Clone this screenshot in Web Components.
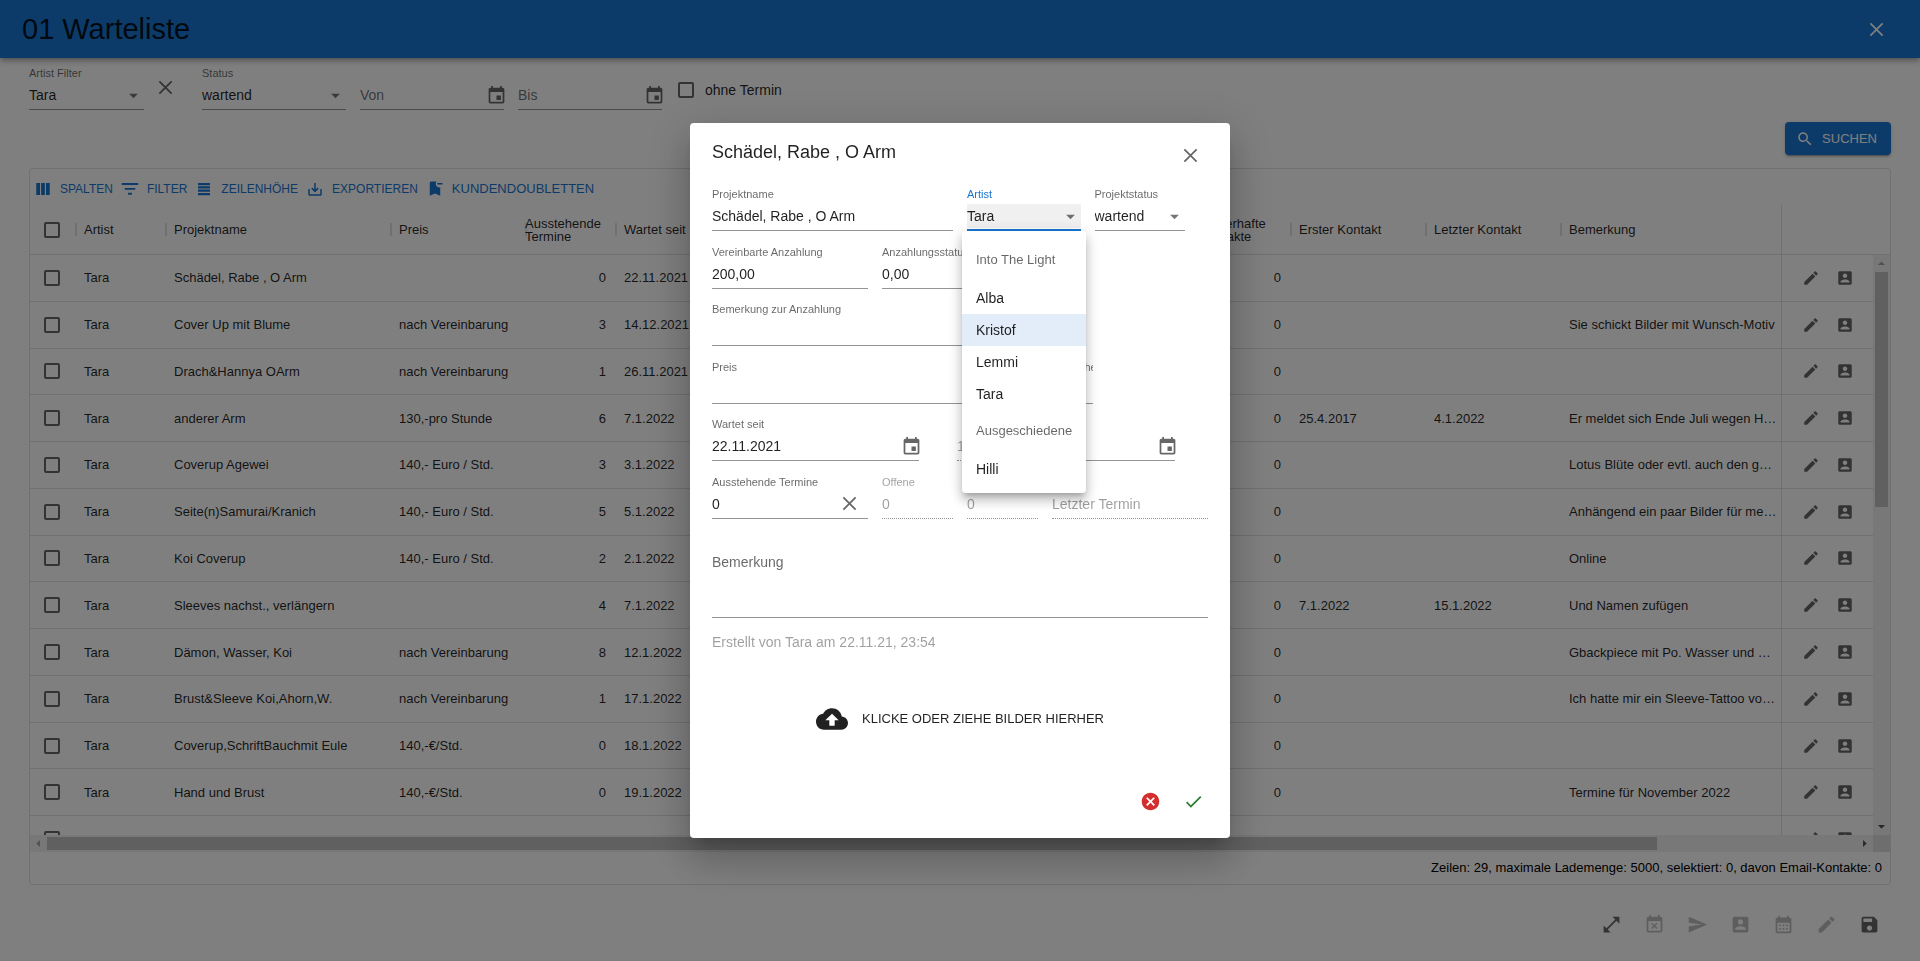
<!DOCTYPE html>
<html lang="de">
<head>
<meta charset="utf-8">
<title>01 Warteliste</title>
<style>
  html, body { margin: 0; height: 100%; }
  body { font-family: "Liberation Sans", Arial, sans-serif; font-size: 14px; color: rgba(0,0,0,.87); background: #fff; overflow: hidden; }
</style>
</head>
<body>
<wl-app></wl-app>
<script>
const PATHS = {
  close: '<path d="M5 5L19 19M19 5L5 19" fill="none" stroke="currentColor" stroke-width="2"/>',
  down: '<path d="M7 10l5 5 5-5z"/>',
  event: '<path d="M17 12h-5v5h5v-5zM16 1v2H8V1H6v2H5c-1.11 0-1.99.9-1.99 2L3 19c0 1.1.89 2 2 2h14c1.1 0 2-.9 2-2V5c0-1.1-.9-2-2-2h-1V1h-2zm3 18H5V8h14v11z"/>',
  search: '<path d="M15.5 14h-.79l-.28-.27C15.41 12.59 16 11.11 16 9.5 16 5.91 13.09 3 9.5 3S3 5.91 3 9.5 5.91 16 9.5 16c1.61 0 3.09-.59 4.23-1.57l.27.28v.79l5 4.99L20.49 19l-4.99-5zm-6 0C7.01 14 5 11.99 5 9.5S7.01 5 9.5 5 14 7.01 14 9.5 11.99 14 9.5 14z"/>',
  columns: '<path d="M3 4h5v16H3zM9.500 4h5v16h-5zM16 4h5v16h-5z"/>',
  filter: '<path d="M1 4h22v2.500H1zM5 10.500h14V13H5zM9.500 17h5v2.500h-5z"/>',
  density: '<path d="M4 4h16v3H4zM4 8.400h16v3H4zM4 12.800h16v3H4zM4 17.200h16v3H4z"/>',
  saveAlt: '<path d="M19 12v7H5v-7H3v7c0 1.1.9 2 2 2h14c1.1 0 2-.9 2-2v-7h-2zm-6 .67l2.59-2.58L17 11.5l-5 5-5-5 1.41-1.41L11 12.67V4h2z"/>',
  bookmark: '<path d="M22 6h-7V4h7v2zm-3 15l-7-3-7 3V4c0-1.1.9-2 2-2h7c-.63.84-1 1.87-1 3 0 2.76 2.24 5 5 5 .34 0 .68-.03 1-.1V21z"/>',
  edit: '<path d="M3 17.25V21h3.75L17.81 9.94l-3.75-3.75L3 17.25zM20.71 7.04c.39-.39.39-1.02 0-1.41l-2.34-2.34c-.39-.39-1.02-.39-1.41 0l-1.83 1.83 3.75 3.75 1.83-1.83z"/>',
  contact: '<path d="M3 5v14c0 1.1.89 2 2 2h14c1.1 0 2-.9 2-2V5c0-1.1-.9-2-2-2H5c-1.11 0-2 .9-2 2zm12 4c0 1.66-1.34 3-3 3s-3-1.34-3-3 1.34-3 3-3 3 1.34 3 3zm-9 8c0-2 4-3.1 6-3.1s6 1.1 6 3.1v1H6v-1z"/>',
  expand: '<path d="M21 11V3h-8l3.29 3.29-10 10L3 13v8h8l-3.29-3.29 10-10z"/>',
  eventBusy: '<path d="M9.31 17l2.44-2.44L14.19 17l1.06-1.06-2.44-2.44 2.44-2.44L14.19 10l-2.44 2.44L9.31 10l-1.06 1.06 2.44 2.44-2.44 2.44L9.31 17zM19 3h-1V1h-2v2H8V1H6v2H5c-1.11 0-1.99.9-1.99 2L3 19c0 1.1.89 2 2 2h14c1.1 0 2-.9 2-2V5c0-1.1-.9-2-2-2zm0 16H5V8h14v11z"/>',
  send: '<path d="M2.01 21L23 12 2.01 3 2 10l15 2-15 2z"/>',
  month: '<path d="M19 4h-1V2h-2v2H8V2H6v2H5c-1.11 0-1.99.9-1.99 2L3 20c0 1.1.89 2 2 2h14c1.1 0 2-.9 2-2V6c0-1.1-.9-2-2-2zm0 16H5V10h14v10zM9 14H7v-2h2v2zm4 0h-2v-2h2v2zm4 0h-2v-2h2v2zm-8 4H7v-2h2v2zm4 0h-2v-2h2v2zm4 0h-2v-2h2v2z"/>',
  save: '<path d="M17 3H5c-1.11 0-2 .9-2 2v14c0 1.1.89 2 2 2h14c1.1 0 2-.9 2-2V7l-4-4zm-5 16c-1.66 0-3-1.34-3-3s1.34-3 3-3 3 1.34 3 3-1.34 3-3 3zm3-10H5V5h10v4z"/>',
  upload: '<path d="M19.35 10.04C18.67 6.59 15.64 4 12 4 9.11 4 6.6 5.64 5.35 8.04 2.34 8.36 0 10.91 0 14c0 3.31 2.69 6 6 6h13c2.76 0 5-2.24 5-5 0-2.64-2.05-4.78-4.65-4.96zM14 13v4h-4v-4H7l5-5 5 5h-3z"/>',
  cancel: '<path d="M12 2C6.47 2 2 6.47 2 12s4.47 10 10 10 10-4.47 10-10S17.53 2 12 2zm5 13.59L15.59 17 12 13.41 8.41 17 7 15.59 10.59 12 7 8.41 8.41 7 12 10.59 15.59 7 17 8.41 13.41 12 17 15.59z"/>',
  check: '<path d="M9 16.17L4.83 12l-1.42 1.41L9 19 21 7l-1.41-1.41z"/>',
  up: '<path d="M7 14l5-5 5 5z"/>', left: '<path d="M14 7l-5 5 5 5z"/>', right: '<path d="M10 7l5 5-5 5z"/>'
};
const def = (name, render) => customElements.define(name, class extends HTMLElement {
  constructor() { super(); this.attachShadow({ mode: 'open' }); }
  connectedCallback() { this.shadowRoot.innerHTML = render(this); }
});

/* size comes from --icon, 21px by default */
def('wl-icon', el => `
  <style>:host{display:block;flex:none;width:var(--icon,21px);height:var(--icon,21px)}svg{display:block;width:100%;height:100%;fill:currentColor}</style>
  <svg viewBox="0 0 24 24" aria-hidden="true">${PATHS[el.getAttribute('name')]}</svg>`);

def('wl-icon-button', el => `
  <style>
    :host{display:block;flex:none}
    button{display:flex;align-items:center;justify-content:center;width:var(--size,21px);height:var(--size,21px);margin:0;padding:0;border:0;background:none;color:inherit}
  </style>
  <button type="button" aria-label="${el.getAttribute('label')}" ${el.hasAttribute('disabled') ? 'disabled' : ''}><wl-icon name="${el.getAttribute('icon')}"></wl-icon></button>`);

def('wl-checkbox', el => `
  <style>
    :host{display:block}
    label{display:flex;align-items:center;gap:11px}
    input{appearance:none;width:16px;height:16px;margin:0;border:2px solid rgba(0,0,0,.6);border-radius:2px;flex:none}
  </style>
  <label><input type="checkbox" ${el.hasAttribute('name') ? `aria-label="${el.getAttribute('name')}"` : ''}><slot></slot></label>`);

/* text, select or date field with floating label and underline */
def('wl-field', el => {
  const a = n => el.getAttribute(n) || '', kind = a('kind'), dis = el.hasAttribute('disabled') ? 'disabled' : '';
  const control = kind === 'select'
    ? `<select id="c" ${dis}><option>${a('value')}</option></select><wl-icon class="arrow" name="down"></wl-icon>`
    : `<input id="c" type="text" value="${a('value')}" placeholder="${a('placeholder')}" ${dis}>` +
      (kind === 'date' ? '<wl-icon-button class="cal" icon="event" label="Datum wählen"></wl-icon-button>' : '') +
      (kind === 'clear' ? '<wl-icon-button class="clear" icon="close" label="Leeren"></wl-icon-button>' : '');
  return `
  <style>
    :host{display:block;min-width:0;position:relative}
    label{display:block;height:15px;font-size:11px;line-height:15px;color:rgba(0,0,0,.6);white-space:nowrap}
    .row{display:flex;align-items:center;height:28px;border-bottom:1px solid rgba(0,0,0,.42)}
    input,select{appearance:none;flex:1;min-width:0;width:100%;height:24px;margin:0;padding:0;border:0;border-radius:0;background:none;font:inherit;color:rgba(0,0,0,.87);outline:0;opacity:1}
    input::placeholder{color:rgba(0,0,0,.58);opacity:1}
    .arrow{margin-left:-21px;color:rgba(0,0,0,.54);pointer-events:none}
    .cal{margin-right:-3px;color:rgba(0,0,0,.6)}
    .clear{margin-right:8px;color:rgba(0,0,0,.6)}
    :host([focused]) label{color:#1976d2}
    :host([focused]) .row{border-bottom:1px solid #1976d2;box-shadow:inset 0 -1px #1976d2}
    :host([focused]) select{background:#f0f0f0}
    :host([disabled]) label,:host([disabled]) input,:host([disabled]) input::placeholder{color:rgba(0,0,0,.38);-webkit-text-fill-color:rgba(0,0,0,.38)}
    :host([disabled]) .row{border-bottom-style:dotted}
    :host([tail]) label{box-sizing:border-box;overflow:hidden;padding-left:calc(100% - 8px)}
  </style>
  <label for="c">${a('label')}</label><div class="row">${control}</div><slot></slot>`;
});

def('wl-header', el => `
  <style>
    :host{display:flex;align-items:center;justify-content:space-between;height:58px;padding:0 33px 0 22px;background:#1976d2;color:rgba(0,0,0,.87);box-shadow:0 2px 4px -1px rgba(0,0,0,.2),0 4px 5px rgba(0,0,0,.14),0 1px 10px rgba(0,0,0,.12);position:relative}
    h1{margin:0;font-size:29px;line-height:32px;font-weight:400}
    wl-icon-button{color:#fff}
  </style>
  <h1><slot></slot></h1><wl-icon-button icon="close" label="Schließen"></wl-icon-button>`);

def('wl-filters', el => `
  <style>
    :host{display:block;padding:8px 29px 13px}
    .fields{display:flex}
    .f{width:144px;margin-right:14px}
    .a{width:115px}
    .x{margin:11px 26px 0 11px;color:rgba(0,0,0,.6)}
    .c{margin:16px 0 0 2px;align-self:flex-start}
    .go{display:flex;justify-content:flex-end;margin-top:12px}
    button{display:flex;align-items:center;gap:8px;height:33px;padding:0 14px 0 11px;border:0;border-radius:4px;background:#1976d2;color:#fff;font:13px/20px "Liberation Sans",Arial,sans-serif;--icon:18px;box-shadow:0 3px 1px -2px rgba(0,0,0,.2),0 2px 2px rgba(0,0,0,.14),0 1px 5px rgba(0,0,0,.12)}
  </style>
  <div class="fields">
    <wl-field class="a" kind="select" label="Artist Filter" value="Tara"></wl-field>
    <wl-icon-button class="x" icon="close" label="Filter löschen"></wl-icon-button>
    <wl-field class="f" kind="select" label="Status" value="wartend"></wl-field>
    <wl-field class="f" kind="date" placeholder="Von"></wl-field>
    <wl-field class="f" kind="date" placeholder="Bis"></wl-field>
    <wl-checkbox class="c">ohne Termin</wl-checkbox>
  </div>
  <div class="go"><button type="button"><wl-icon name="search"></wl-icon>SUCHEN</button></div>`);

const V = 'nach Vereinbarung', E = '140,- Euro / Std.', S = '140,-€/Std.';
const ROWS = [
  ['Schädel, Rabe , O Arm', '', 0, '22.11.2021', '', '', ''],
  ['Cover Up mit Blume', V, 3, '14.12.2021', '', '', 'Sie schickt Bilder mit Wunsch-Motiv'],
  ['Drach&amp;Hannya OArm', V, 1, '26.11.2021', '', '', ''],
  ['anderer Arm', '130,-pro Stunde', 6, '7.1.2022', '25.4.2017', '4.1.2022', 'Er meldet sich Ende Juli wegen H…'],
  ['Coverup Agewei', E, 3, '3.1.2022', '', '', 'Lotus Blüte oder evtl. auch den g…'],
  ['Seite(n)Samurai/Kranich', E, 5, '5.1.2022', '', '', 'Anhängend ein paar Bilder für me…'],
  ['Koi Coverup', E, 2, '2.1.2022', '', '', 'Online'],
  ['Sleeves nachst., verlängern', '', 4, '7.1.2022', '7.1.2022', '15.1.2022', 'Und Namen zufügen'],
  ['Dämon, Wasser, Koi', V, 8, '12.1.2022', '', '', 'Gbackpiece mit Po. Wasser und …'],
  ['Brust&amp;Sleeve Koi,Ahorn,W.', V, 1, '17.1.2022', '', '', 'Ich hatte mir ein Sleeve-Tattoo vo…'],
  ['Coverup,SchriftBauchmit Eule', S, 0, '18.1.2022', '', '', ''],
  ['Hand und Brust', S, 0, '19.1.2022', '', '', 'Termine für November 2022'],
  ['Wadl/Kniekehle', V, 1, '2.2.2022', '', '', 'Mein Wunsch-Tattoo wäre ideal']
];

def('wl-table', el => `
  <style>
    :host{display:block;overflow:hidden;min-height:0}
    table{border-collapse:separate;border-spacing:0;table-layout:fixed;width:100%;height:658px;font-size:13px;line-height:13px}
    th,td{box-sizing:border-box;padding:0 9px;text-align:left;font-weight:400;border-bottom:1px solid #e0e0e0;white-space:nowrap}
    thead tr{height:50px}
    th{padding:0 0 0 9px}
    th span{display:block}
    th:not(:first-child):not(.gap):not(.act){background:linear-gradient(#e0e0e0,#e0e0e0) 0 50%/2px 13px no-repeat}
    .n{text-align:right}
    th.two{padding:0}
    .act{border-left:1px solid #e0e0e0;padding:0}
    .act div{display:flex;gap:16px;padding-left:20px;color:rgba(0,0,0,.6);--icon:18px;--size:18px}
    wl-checkbox{margin-left:5px}
    th:first-child,td:first-child{padding:0 0 0 9px}
  </style>
  <table>
    <colgroup><col style="width:45px"><col style="width:90px"><col style="width:225px"><col style="width:135px"><col style="width:90px"><col style="width:135px"><col style="width:450px"><col style="width:90px"><col style="width:135px"><col style="width:135px"><col><col style="width:92px"></colgroup>
    <thead><tr>
      <th><wl-checkbox name="Alle auswählen"></wl-checkbox></th><th>Artist</th><th>Projektname</th><th>Preis</th>
      <th class="two"><span>Ausstehende</span><span>Termine</span></th><th>Wartet seit</th><th class="gap"></th>
      <th class="two"><span>Fehlerhafte</span><span>Kontakte</span></th><th>Erster Kontakt</th><th>Letzter Kontakt</th><th>Bemerkung</th><th class="act"></th>
    </tr></thead>
    <tbody>${ROWS.map(r => `<tr>
      <td><wl-checkbox name="Zeile auswählen"></wl-checkbox></td><td>Tara</td><td>${r[0]}</td><td>${r[1]}</td>
      <td class="n">${r[2]}</td><td>${r[3]}</td><td></td><td class="n">0</td><td>${r[4]}</td><td>${r[5]}</td><td>${r[6]}</td>
      <td class="act"><div><wl-icon-button icon="edit" label="Bearbeiten"></wl-icon-button><wl-icon-button icon="contact" label="Kontakt"></wl-icon-button></div></td></tr>`).join('')}
    </tbody>
  </table>`);

def('wl-scrollbar', el => {
  const v = el.hasAttribute('vertical');
  return `
  <style>
    :host{display:flex;flex-direction:${v ? 'column' : 'row'};align-items:center;background:#f1f1f1;color:#505050;--icon:17px;min-width:0;min-height:0}
    .lane{flex:1;align-self:stretch;${v ? 'padding:0 2px' : 'padding:2px 0'}}
    .thumb{background:#c1c1c1;${v ? 'height:43%' : 'width:89%;height:13px'}}
    .off{color:#a3a3a3}
  </style>
  <wl-icon class="off" name="${v ? 'up' : 'left'}"></wl-icon><div class="lane"><div class="thumb"></div></div><wl-icon name="${v ? 'down' : 'right'}"></wl-icon>`;
});

def('wl-grid', el => `
  <style>
    :host{display:flex;flex-direction:column;flex:1;min-height:0;margin:0 29px;border:1px solid #e0e0e0;border-radius:4px}
    .bar{display:flex;align-items:center;height:33px;padding:3px 0 0;color:#1976d2;--icon:18px}
    .bar button{display:flex;align-items:center;gap:8px;height:24px;padding:0 4px;border:0;background:none;color:inherit;font:12px/20px "Liberation Sans",Arial,sans-serif}
    .bar .big{font-size:13px}
    .main{flex:1;min-height:0;display:grid;grid-template-columns:minmax(0,1fr) 17px;grid-template-rows:50px minmax(0,1fr) 17px}
    wl-table{grid-row:1/3;grid-column:1}
    .head{border-bottom:1px solid #e0e0e0}
    .corner{background:#dcdcdc}
    footer{height:32px;line-height:32px;padding-right:8px;text-align:right;font-size:13px;color:#000}
  </style>
  <div class="bar">
    <button type="button"><wl-icon name="columns"></wl-icon>SPALTEN</button>
    <button type="button"><wl-icon name="filter"></wl-icon>FILTER</button>
    <button type="button"><wl-icon name="density"></wl-icon>ZEILENHÖHE</button>
    <button type="button"><wl-icon name="saveAlt"></wl-icon>EXPORTIEREN</button>
    <button type="button" class="big"><wl-icon name="bookmark"></wl-icon>KUNDENDOUBLETTEN</button>
  </div>
  <div class="main">
    <wl-table></wl-table><div class="head"></div><wl-scrollbar vertical></wl-scrollbar>
    <wl-scrollbar></wl-scrollbar><div class="corner"></div>
  </div>
  <footer>Zeilen: 29, maximale Lademenge: 5000, selektiert: 0, davon Email-Kontakte: 0</footer>`);

def('wl-actions', el => `
  <style>
    :host{display:flex;align-items:center;justify-content:flex-end;height:73px;padding:3px 29px 0 0;--size:43px;color:rgba(0,0,0,.6)}
    [disabled]{color:rgba(0,0,0,.26)}
  </style>
  <wl-icon-button icon="expand" label="Vergrößern"></wl-icon-button>
  <wl-icon-button icon="eventBusy" label="Termin absagen" disabled></wl-icon-button>
  <wl-icon-button icon="send" label="Senden" disabled></wl-icon-button>
  <wl-icon-button icon="contact" label="Kontakt" disabled></wl-icon-button>
  <wl-icon-button icon="month" label="Kalender" disabled></wl-icon-button>
  <wl-icon-button icon="edit" label="Bearbeiten" disabled></wl-icon-button>
  <wl-icon-button icon="save" label="Speichern"></wl-icon-button>`);

/* open list of the artist drop-down, lies over the form */
def('wl-menu', el => `
  <style>
    :host{display:block;position:absolute;top:100%;left:-5px;right:-5px;z-index:2}
    ul{margin:0;padding:8px 0;list-style:none;background:#fff;border-radius:4px;box-shadow:0 5px 5px -3px rgba(0,0,0,.2),0 8px 10px 1px rgba(0,0,0,.14),0 3px 14px 2px rgba(0,0,0,.12)}
    li{height:32px;line-height:32px;padding-left:14px;white-space:nowrap}
    .sub{height:43px;line-height:42px;font-size:13px;color:rgba(0,0,0,.6)}
    .on{background:#e3edf9}
  </style>
  <ul role="listbox">
    <li class="sub" role="presentation">Into The Light</li>
    <li role="option">Alba</li><li class="on" role="option" aria-selected="true">Kristof</li><li role="option">Lemmi</li><li role="option">Tara</li>
    <li class="sub" role="presentation">Ausgeschiedene</li>
    <li role="option">Hilli</li>
  </ul>`);

def('wl-dialog', el => `
  <style>
    :host{position:fixed;inset:0;display:flex;align-items:center;justify-content:center;background:rgba(0,0,0,.5);z-index:5}
    section{box-sizing:border-box;width:540px;max-width:100%;padding:17px 22px 15px;background:#fff;border-radius:4px;box-shadow:0 11px 15px -7px rgba(0,0,0,.2),0 24px 38px 3px rgba(0,0,0,.14),0 9px 46px 8px rgba(0,0,0,.12)}
    header{display:flex;justify-content:space-between;height:47px;padding-right:7px}
    h2{margin:0;font-size:18px;line-height:24px;font-weight:400}
    header wl-icon-button{margin-top:5px;color:rgba(0,0,0,.6)}
    form{display:flex;flex-direction:column;justify-content:space-between;height:332px}
    .r{display:grid;grid-template-columns:repeat(12,minmax(0,1fr));column-gap:14px}
    .s2{grid-column:span 2}.s3{grid-column:span 3}.s4{grid-column:span 4}.s6{grid-column:span 6}.s8{grid-column:span 8}
    .st{grid-column:span 3;margin-right:23px}
    .d{display:flex;gap:38px}
    .d1{width:207px}.d2{width:86px}.d3{width:94px}
    .tail{grid-column:span 1;margin-right:-12px}
    textarea{display:block;box-sizing:border-box;width:100%;height:66px;margin:33px 0 0;padding:0;border:0;border-bottom:1px solid rgba(0,0,0,.42);border-radius:0;resize:none;font:14px/20px "Liberation Sans",Arial,sans-serif}
    textarea::placeholder{color:rgba(0,0,0,.6);opacity:1}
    p{margin:14px 0 37px;line-height:20px;color:rgba(0,0,0,.38)}
    .up{display:flex;align-items:center;justify-content:center;gap:14px;width:100%;height:60px;padding:0;border:0;background:none;color:rgba(0,0,0,.87);font:13px/20px "Liberation Sans",Arial,sans-serif;--icon:32px}
    footer{display:flex;justify-content:flex-end;margin:31px -7px 0 0;--size:43px}
    .no{color:#d32f2f}.ok{color:#2e7d32}
  </style>
  <section role="dialog" aria-modal="true" aria-labelledby="t">
    <header><h2 id="t">Schädel, Rabe , O Arm</h2><wl-icon-button icon="close" label="Schließen"></wl-icon-button></header>
    <form>
      <div class="r">
        <wl-field class="s6" label="Projektname" value="Schädel, Rabe , O Arm"></wl-field>
        <wl-field class="s3" kind="select" label="Artist" value="Tara" focused><wl-menu></wl-menu></wl-field>
        <wl-field class="st" kind="select" label="Projektstatus" value="wartend"></wl-field>
      </div>
      <div class="r">
        <wl-field class="s4" label="Vereinbarte Anzahlung" value="200,00"></wl-field>
        <wl-field class="s4" label="Anzahlungsstatus" value="0,00"></wl-field>
      </div>
      <div class="r"><wl-field class="s8" label="Bemerkung zur Anzahlung"></wl-field></div>
      <div class="r">
        <wl-field class="s8" label="Preis"></wl-field>
        <wl-field class="tail" label="he" tail></wl-field>
      </div>
      <div class="d">
        <wl-field class="d1" kind="date" label="Wartet seit" value="22.11.2021"></wl-field>
        <wl-field class="d2" value="1" disabled></wl-field>
        <wl-field class="d3" kind="date"></wl-field>
      </div>
      <div class="r">
        <wl-field class="s4" kind="clear" label="Ausstehende Termine" value="0"></wl-field>
        <wl-field class="s2" label="Offene" value="0" disabled></wl-field>
        <wl-field class="s2" value="0" disabled></wl-field>
        <wl-field class="s4" placeholder="Letzter Termin" disabled></wl-field>
      </div>
    </form>
    <textarea placeholder="Bemerkung" aria-label="Bemerkung"></textarea>
    <p>Erstellt von Tara am 22.11.21, 23:54</p>
    <button type="button" class="up"><wl-icon name="upload"></wl-icon>KLICKE ODER ZIEHE BILDER HIERHER</button>
    <footer><wl-icon-button class="no" icon="cancel" label="Abbrechen"></wl-icon-button><wl-icon-button class="ok" icon="check" label="Übernehmen"></wl-icon-button></footer>
  </section>`);

def('wl-app', el => `
  <style>:host{display:flex;flex-direction:column;height:100vh}</style>
  <wl-header>01 Warteliste</wl-header>
  <wl-filters></wl-filters>
  <wl-grid></wl-grid>
  <wl-actions></wl-actions>
  <wl-dialog></wl-dialog>`);
</script>
</body>
</html>
